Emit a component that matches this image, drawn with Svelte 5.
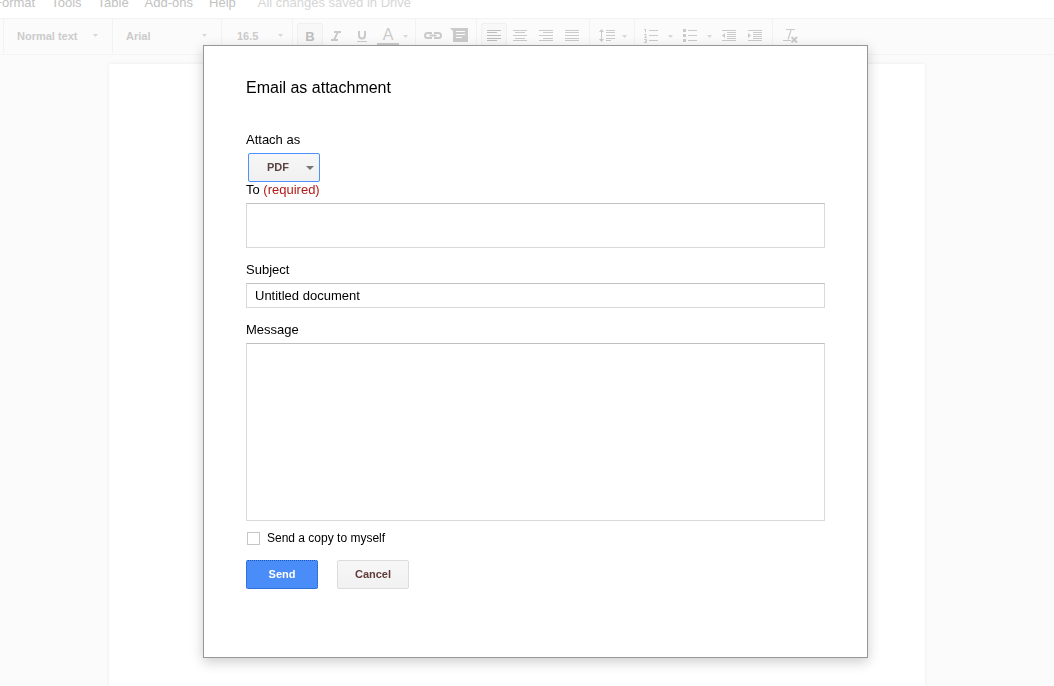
<script>
  let format = $state('PDF');
  let to = $state('');
  let subject = $state('Untitled document');
  let message = $state('');
  let copy = $state(false);

  const menus = ['Format', 'Tools', 'Table', 'Add-ons', 'Help'];
  const aligns = [
    { name: 'Align left', d: 'M2 3.5h14M2 5.5h10M2 8.5h14M2 11.5h14M2 13.5h10', active: true },
    { name: 'Align center', d: 'M2 3.5h14M4 5.5h10M2 8.5h14M4 11.5h10M2 13.5h14' },
    { name: 'Align right', d: 'M2 3.5h14M6 5.5h10M2 8.5h14M6 11.5h10M2 13.5h14' },
    { name: 'Justify', d: 'M2 3.5h14M2 5.5h14M2 8.5h14M2 11.5h14M2 13.5h14' }
  ];
</script>

{#snippet caret()}
  <span class="caret"><svg width="5" height="3" viewBox="0 0 5 3"><path d="M0 0h5L2.5 3z" /></svg></span>
{/snippet}

<div class="app">
  <nav class="menubar">
    {#each menus as menu}
      <button>{menu}</button>
    {/each}
    <span class="status">All changes saved in Drive</span>
  </nav>

  <div class="toolbar">
    <div class="group wide"><button class="picker">Normal text{@render caret()}</button></div>
    <div class="group wide"><button class="picker">Arial{@render caret()}</button></div>
    <div class="group size"><button class="picker">16.5{@render caret()}</button></div>
    <div class="group">
      <button class="tool active" aria-label="Bold"><b class="glyph">B</b></button>
      <button class="tool" aria-label="Italic">
        <svg viewBox="0 0 18 18"><path class="fill" d="M7 4h7v2h-2.5L8.600 12H11v2H4v-2h2.400L9.300 6H7z" /></svg>
      </button>
      <button class="tool" aria-label="Underline">
        <svg viewBox="0 0 18 18"><path d="M6 4v4.500a3 3 0 0 0 6 0V4" stroke-width="2" /><path d="M4 14.500h10" /></svg>
      </button>
      <button class="tool color" aria-label="Text color"><span>A</span></button>
      {@render caret()}
    </div>
    <div class="group">
      <button class="tool" aria-label="Insert link">
        <svg viewBox="0 0 18 18"><path d="M8 6H3.500a2.500 2.500 0 0 0 0 5H8M10 6h4.500a2.500 2.500 0 0 1 0 5H10M5.500 8.500h7" stroke-width="2" /></svg>
      </button>
      <button class="tool" aria-label="Insert comment">
        <svg viewBox="0 0 18 18"><path class="fill" fill-rule="evenodd" d="M0 1h18v14H3V4zM6 4v1h9V4zm0 3v1h9V7zm0 3v1h6v-1z" /></svg>
      </button>
    </div>
    <div class="group">
      {#each aligns as a}
        <button class="tool" class:active={a.active} aria-label={a.name}>
          <svg viewBox="0 0 18 18" shape-rendering="crispEdges"><path d={a.d} /></svg>
        </button>
      {/each}
    </div>
    <div class="group">
      <button class="tool" aria-label="Line spacing">
        <svg viewBox="0 0 18 18"><path d="M3.500 3v11M8 3.500h9M8 5.500h9M8 8.500h9M8 11.500h9M8 13.500h5" /><path class="fill" d="M1 5l2.500-3L6 5zM1 12l2.500 3L6 12z" /></svg>
      </button>
      {@render caret()}
    </div>
    <div class="group lists">
      <button class="tool" aria-label="Numbered list">
        <svg viewBox="0 0 18 18"><path d="M7 3.500h9M7 8.500h9M7 13.500h9M2 2.500h1.500v3M2 7.500h2v1.500L2.500 10.500H5M2 12.500h2.500v3H2M3 14h1.500" /></svg>
      </button>
      {@render caret()}
      <button class="tool" aria-label="Bulleted list">
        <svg viewBox="0 0 18 18"><path d="M7 3.500h9M7 8.500h9M7 13.500h9" /><path class="fill" d="M2 2h3v3H2zM2 7h3v3H2zM2 12h3v3H2z" /></svg>
      </button>
      {@render caret()}
      <button class="tool" aria-label="Decrease indent">
        <svg viewBox="0 0 18 18"><path d="M2 3.500h14M7 5.500h9M7 7.500h9M7 9.500h9M7 11.500h9M2 13.500h14" /><path class="fill" d="M5 6v5L2 8.500z" /></svg>
      </button>
      <button class="tool" aria-label="Increase indent">
        <svg viewBox="0 0 18 18"><path d="M2 3.500h14M7 5.500h9M7 7.500h9M7 9.500h9M7 11.500h9M2 13.500h14" /><path class="fill" d="M2 6v5l3-2.500z" /></svg>
      </button>
    </div>
    <div class="group">
      <button class="tool" aria-label="Clear formatting">
        <svg viewBox="0 0 18 18"><path d="M5 2.500h9M10 3L7 12.500M2 13.500h8" stroke-width="1.200" /><path d="M10.500 10l5.500 5.500M16 10l-5.500 5.500" stroke-width="2" /></svg>
      </button>
    </div>
  </div>

  <main class="canvas"><div class="sheet"></div></main>
</div>

<div class="overlay">
  <div class="dialog" role="dialog" aria-modal="true" aria-labelledby="dialog-title">
    <h1 id="dialog-title">Email as attachment</h1>
    <form onsubmit={(e) => e.preventDefault()}>
      <label for="format">Attach as</label>
      <div class="select">
        <select id="format" bind:value={format}>
          <option>PDF</option>
          <option>HTML</option>
          <option>Plain text</option>
        </select>
        <svg width="8" height="4" viewBox="0 0 8 4"><path d="M0 0h8L4 4z" /></svg>
      </div>
      <label class="to-label" for="to">To <span>(required)</span></label>
      <textarea id="to" class="to" bind:value={to}></textarea>
      <label for="subject">Subject</label>
      <input id="subject" class="subject" type="text" bind:value={subject} />
      <label for="message">Message</label>
      <textarea id="message" class="message" bind:value={message}></textarea>
      <div class="copy">
        <input id="copy" type="checkbox" bind:checked={copy} />
        <label for="copy">Send a copy to myself</label>
      </div>
      <div class="actions">
        <button class="action send" type="submit">Send</button>
        <button class="action" type="button">Cancel</button>
      </div>
    </form>
  </div>
</div>

<style>
  :global(body) {
    margin: 0;
    background: #fbfbfb;
    font-family: "Liberation Sans", Arial, sans-serif;
    font-size: 13px;
    color: #000;
  }
  * {
    box-sizing: border-box;
  }
  button,
  input,
  select,
  textarea {
    margin: 0;
    font: inherit;
    color: inherit;
  }
  .app {
    display: flex;
    flex-direction: column;
    height: 100vh;
    overflow: hidden;
  }
  .app button {
    padding: 0;
    border: 0;
    background: none;
  }
  .menubar {
    display: flex;
    flex: none;
    gap: 16px;
    height: 23px;
    margin: -5px 0 0 -6px;
    background: #fff;
    color: #c2c2c2;
    line-height: 16px;
    white-space: nowrap;
    align-items: flex-start;
  }
  .menubar button {
    line-height: 16px;
  }
  .status {
    margin-left: 6px;
    color: #d6d6d6;
  }
  .toolbar {
    display: flex;
    flex: none;
    height: 37px;
    padding: 0 0 1px 3px;
    border-top: 1px solid #f4f4f4;
    border-bottom: 1px solid #f4f4f4;
    background: #fbfbfb;
    color: #cbcbcb;
  }
  .group {
    display: flex;
    align-items: center;
    padding: 0 4px;
    border-left: 1px solid #f2f2f2;
  }
  .wide {
    width: 109px;
    padding: 0 12px 0 13px;
  }
  .size {
    width: 71px;
    padding: 0 7px 0 15px;
  }
  .app .picker {
    display: flex;
    flex: 1;
    align-items: center;
    justify-content: space-between;
    padding-bottom: 1px;
    font-size: 11px;
    font-weight: bold;
  }
  .tool {
    display: flex;
    flex: none;
    align-items: center;
    justify-content: center;
    width: 26px;
    height: 26px;
  }
  .app .tool.active {
    border: 1px solid #f0f0f0;
    border-radius: 2px;
    background: #f8f8f8;
    color: #bdbdbd;
  }
  .tool svg {
    flex: none;
    width: 18px;
    height: 18px;
    fill: none;
    stroke: currentColor;
  }
  .tool .fill {
    fill: currentColor;
    stroke: none;
  }
  .glyph {
    font-size: 13px;
  }
  .color span {
    width: 22px;
    border-bottom: 3px solid #cbcbcb;
    font-size: 16px;
    line-height: 17px;
  }
  .caret {
    display: flex;
    flex: none;
    justify-content: center;
    width: 9px;
  }
  .tool + .caret {
    margin-right: 1px;
  }
  .caret svg {
    fill: #d8d8d8;
  }
  .lists {
    padding: 0 4px 0 3px;
  }
  .lists .caret {
    width: 12px;
  }
  .canvas {
    display: flex;
    flex: 1;
    justify-content: center;
    padding: 9px 20px 0 0;
  }
  .sheet {
    width: 816px;
    background: #fff;
    box-shadow: 0 0 3px #eaeaea;
  }
  .overlay {
    position: fixed;
    inset: 0;
    display: flex;
    align-items: center;
    justify-content: center;
    padding: 17px 0 0 17px;
  }
  .dialog {
    width: 665px;
    max-width: 100%;
    padding: 30px 42px 68px;
    border: 1px solid #979797;
    background: #fff;
    box-shadow: 0 4px 12px rgba(0, 0, 0, 0.2);
  }
  h1 {
    margin: 0 0 32px;
    font-size: 16px;
    font-weight: normal;
    line-height: 24px;
  }
  form {
    display: flex;
    flex-direction: column;
  }
  label {
    margin-bottom: 5px;
    line-height: 16px;
  }
  .to-label span {
    color: #b21a16;
  }
  .select {
    display: grid;
    grid-template-columns: 100%;
    align-items: center;
    width: 72px;
    margin: 0 2px;
  }
  .select select,
  .select svg {
    grid-area: 1 / 1;
  }
  .select svg {
    justify-self: end;
    margin-right: 6px;
    fill: #777;
    pointer-events: none;
  }
  select {
    appearance: none;
    width: 100%;
    height: 29px;
    padding: 0 0 2px 18px;
    border: 1px solid #4d90fe;
    border-radius: 2px;
    outline: 0;
    background: linear-gradient(#f7f7f7, #f0f0f0);
    color: #5a4444;
    font-size: 11px;
    font-weight: bold;
  }
  textarea,
  .subject {
    width: 100%;
    padding: 1px 8px;
    border: 1px solid #d9d9d9;
    border-top-color: #c0c0c0;
    border-radius: 0;
    outline: 0;
    background: #fff;
    resize: none;
  }
  .to {
    height: 45px;
    margin-bottom: 14px;
  }
  .subject {
    height: 25px;
    margin-bottom: 14px;
  }
  .message {
    height: 178px;
    margin-bottom: 9px;
  }
  .copy {
    display: flex;
    align-items: center;
    gap: 7px;
    margin-bottom: 14px;
    font-size: 12px;
  }
  .copy label {
    margin: 0;
  }
  .copy input {
    appearance: none;
    width: 13px;
    height: 13px;
    margin-left: 1px;
    border: 1px solid #c6c6c6;
    background: #fff;
  }
  .copy input:checked {
    background: #4d90fe;
  }
  .actions {
    display: flex;
    gap: 19px;
  }
  .action {
    width: 72px;
    height: 29px;
    padding: 0 0 2px;
    border: 1px solid #dcdcdc;
    border-radius: 2px;
    background: linear-gradient(#f7f7f7, #f1f1f1);
    color: #613c38;
    font-size: 11px;
    font-weight: bold;
  }
  .send {
    border: 1px dotted #1c58bc;
    background: #4a8df8;
    color: #fff;
  }
</style>
